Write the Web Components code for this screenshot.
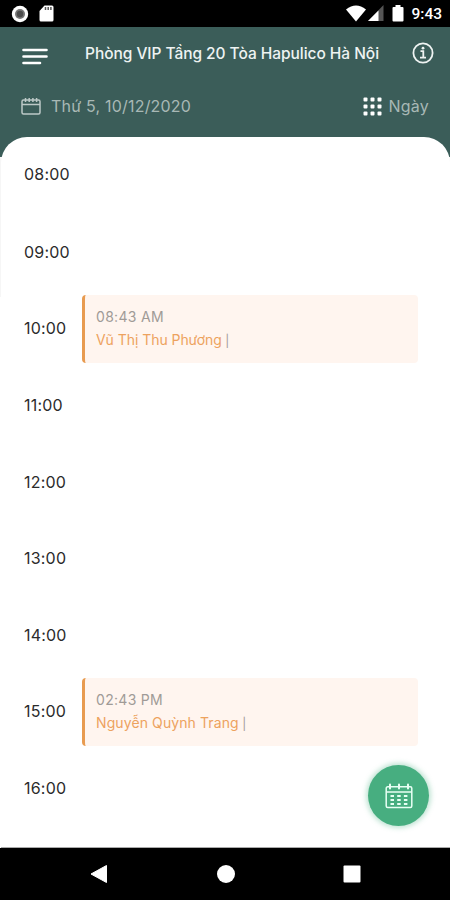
<!DOCTYPE html>
<html lang="vi">
<head>
<meta charset="UTF-8">
<meta name="viewport" content="width=device-width, initial-scale=1">
<title>Lịch phòng họp</title>
<style>
  body {
    margin: 0;
    background: #fff;
    font-family: Inter, "Noto Sans", sans-serif;
  }
</style>
</head>
<body>
<room-schedule>
  <status-bar slot="top" time="9:43"></status-bar>
  <room-header slot="top" date="Thứ 5, 10/12/2020" view="Ngày">Phòng VIP Tầng 20 Tòa Hapulico Hà Nội</room-header>
  <hour-row hour="08:00"></hour-row>
  <hour-row hour="09:00"></hour-row>
  <hour-row hour="10:00"><booking-card time="08:43 AM">Vũ Thị Thu Phương</booking-card></hour-row>
  <hour-row hour="11:00"></hour-row>
  <hour-row hour="12:00"></hour-row>
  <hour-row hour="13:00"></hour-row>
  <hour-row hour="14:00"></hour-row>
  <hour-row hour="15:00"><booking-card time="02:43 PM" style="--name-spacing: 0.1px">Nguyễn Quỳnh Trang</booking-card></hour-row>
  <hour-row hour="16:00"></hour-row>
  <calendar-fab slot="fab"></calendar-fab>
  <nav-bar slot="bottom"></nav-bar>
</room-schedule>

<script>
// 1. RoomSchedule: the whole screen
class RoomSchedule extends HTMLElement {
  constructor() {
    super();
    this.attachShadow({ mode: 'open' });
  }

  connectedCallback() {
    this.shadowRoot.innerHTML = `
      <style>
        :host {
          display: flex;
          flex-direction: column;
          position: relative;
          height: 900px;
          overflow: hidden;
          background: linear-gradient(#3b5d59 157px, #f6f6f6 157px, #f6f6f6 297px, #fff 297px);
        }
        .sheet {
          flex: 1;
          min-height: 0;
          box-sizing: border-box;
          overflow: hidden;
          background: #fff;
          border-radius: 26px 26px 0 0;
          margin-left: 1px;
          border-bottom: 1px solid #aaa;
        }
        ::slotted(calendar-fab) {
          position: absolute;
          right: 21px;
          bottom: 74px;
        }
      </style>
      <slot name="top"></slot>
      <div class="sheet"><slot></slot></div>
      <slot name="bottom"></slot>
      <slot name="fab"></slot>
    `;
  }
}
customElements.define('room-schedule', RoomSchedule);

// 2. StatusBar
class StatusBar extends HTMLElement {
  constructor() {
    super();
    this.attachShadow({ mode: 'open' });
  }

  connectedCallback() {
    const time = this.getAttribute('time') || '';

    this.shadowRoot.innerHTML = `
      <style>
        :host {
          display: flex;
          align-items: center;
          height: 27px;
          padding: 0 8px 0 11px;
          box-sizing: border-box;
          background: #000;
          color: #fff;
          font: 500 15.5px/27px Roboto, sans-serif;
        }
        svg { display: block; }
        .card { margin-left: 10px; }
        .wifi { margin-left: auto; }
        .signal { margin-left: 2px; }
        .battery { margin: 0 7px 0 8px; }
        .time { padding-top: 2px; }
      </style>
      <svg width="18" height="18" viewBox="0 0 18 18">
        <circle cx="9" cy="9" r="8.2" fill="#fff"/>
        <circle cx="9" cy="9" r="5" fill="#777"/>
        <circle cx="9" cy="9" r="3.2" fill="#4d4d4d"/>
      </svg>
      <svg class="card" width="15" height="17" viewBox="0 0 15 17">
        <path d="M5.5 .5H13a1.5 1.5 0 0 1 1.5 1.5v13a1.5 1.5 0 0 1-1.5 1.5H2A1.5 1.5 0 0 1 .5 15V6z" fill="#fff"/>
        <path d="M6.5 2v3M9.2 2v3M11.9 2v3" stroke="#555" stroke-width="1.5"/>
      </svg>
      <svg class="wifi" width="20" height="17" viewBox="0 0 20 17">
        <path d="M0 4.5Q10-3.5 20 4.5L10 16.5z" fill="#fff"/>
      </svg>
      <svg class="signal" width="16" height="17" viewBox="0 0 16 17">
        <path d="M15.5 0v16H0z" fill="#555"/>
        <path d="M10.500 5.500V16H0z" fill="#fff"/>
      </svg>
      <svg class="battery" width="12" height="17" viewBox="0 0 12 17">
        <path d="M3.5 0h5v2h2Q11.5 2 11.5 3v12.5q0 1-1 1h-9q-1 0-1-1V3q0-1 1-1h2z" fill="#fff"/>
      </svg>
      <span class="time">${time}</span>
    `;
  }
}
customElements.define('status-bar', StatusBar);

// 3. RoomHeader
class RoomHeader extends HTMLElement {
  constructor() {
    super();
    this.attachShadow({ mode: 'open' });
  }

  connectedCallback() {
    const date = this.getAttribute('date') || '';
    const view = this.getAttribute('view') || '';

    this.shadowRoot.innerHTML = `
      <style>
        :host {
          display: block;
          height: 110px;
          background: #3b5d59;
          color: #fff;
        }
        .row {
          display: flex;
          align-items: center;
          height: 52px;
          padding: 0 16px 0 22px;
        }
        svg { display: block; flex: none; }
        .menu { margin-top: 6px; }
        .title {
          flex: 1;
          margin-left: 37px;
          font-size: 15.5px;
          font-weight: 500;
          letter-spacing: -0.05px;
          white-space: nowrap;
          color: #eef3f2;
        }
        .sub {
          height: 54px;
          padding: 0 21px;
          font-size: 16px;
          color: #a8b8b5;
        }
        .date { flex: 1; margin-left: 10px; letter-spacing: 0.2px; }
        .date, .view { margin-top: -1px; }
        .view { margin-left: 7px; letter-spacing: 0.2px; }
      </style>
      <div class="row">
        <svg class="menu" width="26" height="17" viewBox="0 0 26 17" stroke="#fff" stroke-width="2.6" stroke-linecap="round">
          <path d="M1.5 2h23M1.5 8.500h23M1.5 15h16.5"/>
        </svg>
        <div class="title"><slot></slot></div>
        <svg width="22" height="22" viewBox="0 0 22 22" fill="none" stroke="#eef3f2">
          <circle cx="11" cy="11" r="9.6" stroke-width="1.8"/>
          <path d="M8.5 9.2h2.8v6.3M8 15.6h6" stroke-width="1.8"/>
          <circle cx="11" cy="6.2" r="1.4" fill="#eef3f2" stroke="none"/>
        </svg>
      </div>
      <div class="row sub">
        <svg width="20" height="18" viewBox="0 0 20 18" fill="none" stroke="#bdc9c7" stroke-width="1.5">
          <rect x="1" y="3" width="18" height="14" rx="1.5"/>
          <path d="M1 7.500h18M4.500 1v4M8.200 1v4M11.900 1v4M15.600 1v4"/>
        </svg>
        <span class="date">${date}</span>
        <svg width="19" height="19" viewBox="0 0 19 19" fill="#fff">
          <rect x=".5" y=".5" width="4" height="4" rx="1"/>
          <rect x="7.5" y=".5" width="4" height="4" rx="1"/>
          <rect x="14.5" y=".5" width="4" height="4" rx="1"/>
          <rect x=".5" y="7.5" width="4" height="4" rx="1"/>
          <rect x="7.5" y="7.5" width="4" height="4" rx="1"/>
          <rect x="14.5" y="7.5" width="4" height="4" rx="1"/>
          <rect x=".5" y="14.5" width="4" height="4" rx="1"/>
          <rect x="7.5" y="14.5" width="4" height="4" rx="1"/>
          <rect x="14.5" y="14.5" width="4" height="4" rx="1"/>
        </svg>
        <span class="view">${view}</span>
      </div>
    `;
  }
}
customElements.define('room-header', RoomHeader);

// 4. HourRow
class HourRow extends HTMLElement {
  constructor() {
    super();
    this.attachShadow({ mode: 'open' });
  }

  connectedCallback() {
    const hour = this.getAttribute('hour') || '';

    this.shadowRoot.innerHTML = `
      <style>
        :host {
          display: grid;
          grid-template-columns: 58px 336px;
          align-items: center;
          height: 76.6px;
          padding-left: 23px;
        }
        :host([hour="08:00"]) { margin-bottom: 1px; }
        .hour {
          margin-top: -2px;
          font-size: 16px;
          letter-spacing: 0.2px;
          color: #2b2b2b;
        }
      </style>
      <span class="hour">${hour}</span>
      <slot></slot>
    `;
  }
}
customElements.define('hour-row', HourRow);

// 5. BookingCard
class BookingCard extends HTMLElement {
  constructor() {
    super();
    this.attachShadow({ mode: 'open' });
  }

  connectedCallback() {
    const time = this.getAttribute('time') || '';

    this.shadowRoot.innerHTML = `
      <style>
        :host {
          display: block;
          box-sizing: border-box;
          height: 68px;
          padding: 10px 0 0 11px;
          border-left: 3px solid #e89b50;
          border-radius: 4px;
          background: #fff5ef;
          font-size: 14px;
          line-height: 23px;
          color: #a09b97;
          white-space: nowrap;
        }
        .time { letter-spacing: 0.3px; }
        .name { color: #eda25e; letter-spacing: var(--name-spacing, -0.05px); }
        .bar { font-size: 12px; }
      </style>
      <div class="time">${time}</div>
      <div><span class="name"><slot></slot></span><span class="bar"> |</span></div>
    `;
  }
}
customElements.define('booking-card', BookingCard);

// 6. CalendarFab: floating button over the list
class CalendarFab extends HTMLElement {
  constructor() {
    super();
    this.attachShadow({ mode: 'open' });
  }

  connectedCallback() {
    this.shadowRoot.innerHTML = `
      <style>
        :host {
          display: flex;
          align-items: center;
          justify-content: center;
          width: 61px;
          height: 61px;
          border-radius: 50%;
          background: #47ae80;
          box-shadow: 0 0 5px 2px rgba(71, 174, 128, 0.35);
        }
      </style>
      <svg width="28" height="26" viewBox="0 0 28 26" fill="none" stroke="#e8fff4" stroke-width="1.5">
        <rect x="1.2" y="3.8" width="25.6" height="20.8" rx="1.5"/>
        <path d="M1.2 9h25.6"/>
        <path d="M5 1.500v4M14 1.500v4M23 1.500v4" stroke-width="2" stroke-linecap="round"/>
        <path d="M5.500 13h17M5.500 17h17M5.500 21h17" stroke-width="2" stroke-dasharray="3.500 3.200"/>
      </svg>
    `;
  }
}
customElements.define('calendar-fab', CalendarFab);

// 7. NavBar
class NavBar extends HTMLElement {
  constructor() {
    super();
    this.attachShadow({ mode: 'open' });
  }

  connectedCallback() {
    this.shadowRoot.innerHTML = `
      <style>
        :host {
          display: flex;
          justify-content: space-between;
          align-items: center;
          box-sizing: border-box;
          height: 52px;
          padding: 0 89px 0 90px;
          background: #000;
        }
        svg { display: block; }
      </style>
      <svg width="18" height="18" viewBox="0 0 18 18"><path d="M16.5 .5v17L1 9z" fill="#fff" stroke="#fff" stroke-linejoin="round"/></svg>
      <svg width="18" height="18" viewBox="0 0 18 18"><circle cx="9" cy="9" r="9" fill="#fff"/></svg>
      <svg width="18" height="18" viewBox="0 0 18 18"><rect x=".5" y=".5" width="17" height="17" rx="1" fill="#fff"/></svg>
    `;
  }
}
customElements.define('nav-bar', NavBar);
</script>
</body>
</html>
